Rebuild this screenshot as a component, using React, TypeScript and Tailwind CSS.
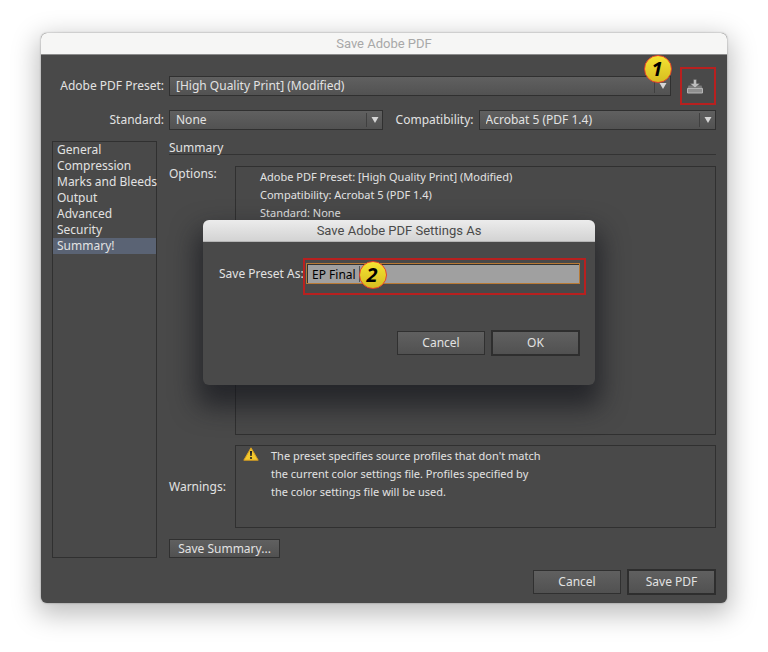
import type { ReactNode } from 'react';
import clsx from 'clsx';

const sections = ['General', 'Compression', 'Marks and Bleeds', 'Output', 'Advanced', 'Security', 'Summary!'];

const Badge = ({ children, className }: { children: ReactNode; className: string }) => (
    <span
        className={clsx(
            'absolute flex size-7 items-center justify-center rounded-full border border-[#e8432a] bg-[linear-gradient(#f5e332,#d6bd20)] pr-[2px] font-["Noto_Sans",sans-serif] text-[20px] leading-none font-bold text-black italic',
            className,
        )}
    >
        {children}
    </span>
);

type SelectProps = {
    id: string;
    value: string;
    className?: string;
};

const Select = ({ id, value, className }: SelectProps) => (
    <div className={clsx('relative', className)}>
        <select
            id={id}
            defaultValue={value}
            className="block h-5 w-full appearance-none border border-[#303030] bg-[linear-gradient(#606060,#525252)] pr-6 pl-[6px] leading-[18px] outline-none"
        >
            <option>{value}</option>
        </select>
        <span className="pointer-events-none absolute inset-y-[3px] right-4 w-px bg-[#404040]" />
        <svg viewBox="0 0 8 6" className="pointer-events-none absolute top-[7px] right-1 h-[6px] w-2" aria-hidden="true">
            <path d="M0.5 0h7L4 6z" fill="#d6d6d6" />
        </svg>
    </div>
);

type PushButtonProps = {
    children: ReactNode;
    primary?: boolean;
    className?: string;
};

const PushButton = ({ children, primary, className }: PushButtonProps) => (
    <button
        type="button"
        className={clsx(
            'flex items-center justify-center bg-[linear-gradient(#606060,#515151)]',
            primary ? 'border-2 border-[#2e2e2e]' : 'border border-[#303030]',
            className,
        )}
    >
        {children}
    </button>
);

const SaveIcon = () => (
    <svg viewBox="0 0 16 15" className="h-[15px] w-4" aria-hidden="true">
        <path d="M1.5 6.5h13l1 3H0.5z" fill="#7d7d7d" />
        <path d="M0.5 9.5h15v4.5H0.5z" fill="#8f8f8f" stroke="#b4b4b4" />
        <path d="M6.5 0.5h3v4h3.5L8 9 3 4.5h3.5z" fill="#bcbcbc" stroke="#4b4b4b" strokeWidth="0.4" />
    </svg>
);

const WarningIcon = () => (
    <svg viewBox="0 0 16 14" className="h-[14px] w-4 shrink-0" aria-hidden="true">
        <path d="M8 0.8 15.2 13.2H0.8z" fill="#f3c92e" stroke="#d9a021" strokeWidth="1" strokeLinejoin="round" />
        <path d="M6.9 4h2.2l-0.4 5H7.3z" fill="#222" />
        <circle cx="8" cy="11" r="1.1" fill="#222" />
    </svg>
);

const SettingsDialog = () => (
    <div
        role="dialog"
        aria-labelledby="settings-title"
        className="absolute top-[187px] left-[162px] w-[392px] overflow-hidden rounded-md bg-[#494949] shadow-[0_16px_26px_6px_rgba(18,20,26,0.65)]"
    >
        <h2
            id="settings-title"
            className="h-[22px] border-b border-[#b5b5b5] bg-[linear-gradient(#ececec,#d3d3d3)] text-center font-[Roboto,sans-serif] text-[13px] leading-[22px] font-normal text-[#4a4a4a]"
        >
            Save Adobe PDF Settings As
        </h2>
        <div className="flex items-start pt-4 pr-[9px] pl-4">
            <label htmlFor="preset-name" className="min-w-0 flex-1 pt-2 whitespace-nowrap">
                Save Preset As:
            </label>
            <div className="relative h-[37px] w-[283px] shrink-0 border-2 border-[#b8201f] px-px pt-[3px]">
                <input
                    id="preset-name"
                    defaultValue="EP Final"
                    className="block h-[21px] w-[274px] border border-[#b87a35] bg-[#a0a0a0] pt-px pl-[5px] text-black shadow-[inset_1px_1px_0_#333] outline-none"
                />
                <span className="absolute top-[6px] left-[54px] h-4 w-px bg-[#555]" />
                <Badge className="top-[1px] left-[54px]">2</Badge>
            </div>
        </div>
        <div className="flex items-center justify-end gap-[6px] pt-[35px] pr-[15px] pb-[29px]">
            <PushButton className="h-6 w-[88px]">Cancel</PushButton>
            <PushButton primary className="h-[26px] w-[89px]">
                OK
            </PushButton>
        </div>
    </div>
);

export default function App() {
    return (
        <main className='min-h-screen bg-white px-[41px] pt-[33px] pb-12 font-["Noto_Sans",sans-serif] text-[12px] leading-4 text-[#e2e2e2]'>
            <div className="relative rounded-md bg-[#494949] shadow-[0_8px_26px_4px_rgba(0,0,0,0.25),0_0_2px_rgba(0,0,0,0.4)]">
                <h1 className="h-[22px] rounded-t-md border-b border-[#8c8c8c] bg-[#f6f6f5] text-center font-[Roboto,sans-serif] text-[13px] leading-[22px] font-normal text-[#a8a8a8]">
                    Save Adobe PDF
                </h1>

                <div className="px-[11px] pt-3 pb-2">
                    <div className="flex items-center">
                        <label htmlFor="preset" className="mr-[5px] w-28 text-right whitespace-nowrap">
                            Adobe PDF Preset:
                        </label>
                        <div className="relative mr-[9px] flex-1">
                            <Select id="preset" value="[High Quality Print] (Modified)" />
                            <Badge className="-top-[21px] -right-px">1</Badge>
                        </div>
                        <button
                            type="button"
                            aria-label="Save preset"
                            className="flex h-[38px] w-9 items-center justify-center border-2 border-[#b8201f] pr-[6px]"
                        >
                            <SaveIcon />
                        </button>
                    </div>

                    <div className="mt-[5px] flex items-center">
                        <label htmlFor="standard" className="mr-[5px] w-28 text-right">
                            Standard:
                        </label>
                        <Select id="standard" value="None" className="flex-[214]" />
                        <label htmlFor="compatibility" className="mr-[5px] w-[91px] text-right">
                            Compatibility:
                        </label>
                        <Select id="compatibility" value="Acrobat 5 (PDF 1.4)" className="flex-[238]" />
                    </div>

                    <div className="mt-[11px] flex gap-3">
                        <ul className="w-[105px] shrink-0 border border-[#303030]">
                            {sections.map((section) => (
                                <li key={section}>
                                    <button
                                        type="button"
                                        className={clsx(
                                            'block w-full pl-1 text-left leading-4 whitespace-nowrap',
                                            section === 'Summary!' && 'bg-[#5a6374]',
                                        )}
                                    >
                                        {section}
                                    </button>
                                </li>
                            ))}
                        </ul>

                        <div className="min-w-0 flex-1">
                            <h2 className="h-[14px] border-b border-[#333] leading-[14px]">Summary</h2>

                            <div className="mt-[11px] flex">
                                <h3 className="w-[66px]">Options:</h3>
                                <div className="min-h-[269px] flex-1 border border-[#303030] pt-px pl-6 text-[11px] leading-[18px]">
                                    <p>Adobe PDF Preset: [High Quality Print] (Modified)</p>
                                    <p>Compatibility: Acrobat 5 (PDF 1.4)</p>
                                    <p>Standard: None</p>
                                </div>
                            </div>

                            <div className="mt-[10px] flex items-center">
                                <h3 className="w-[66px]">Warnings:</h3>
                                <div className="flex min-h-[83px] flex-1 items-start gap-3 border border-[#303030] pt-px pl-[7px] text-[11px] leading-[18px]">
                                    <WarningIcon />
                                    <p>
                                        The preset specifies source profiles that don't match
                                        <br />
                                        the current color settings file. Profiles specified by
                                        <br />
                                        the color settings file will be used.
                                    </p>
                                </div>
                            </div>

                            <PushButton className="mt-[11px] h-[19px] w-[111px]">Save Summary...</PushButton>
                        </div>
                    </div>

                    <div className="mt-[11px] flex items-center justify-end gap-[6px]">
                        <PushButton className="h-6 w-[88px]">Cancel</PushButton>
                        <PushButton primary className="h-[26px] w-[89px]">
                            Save PDF
                        </PushButton>
                    </div>
                </div>

                <SettingsDialog />
            </div>
        </main>
    );
}
